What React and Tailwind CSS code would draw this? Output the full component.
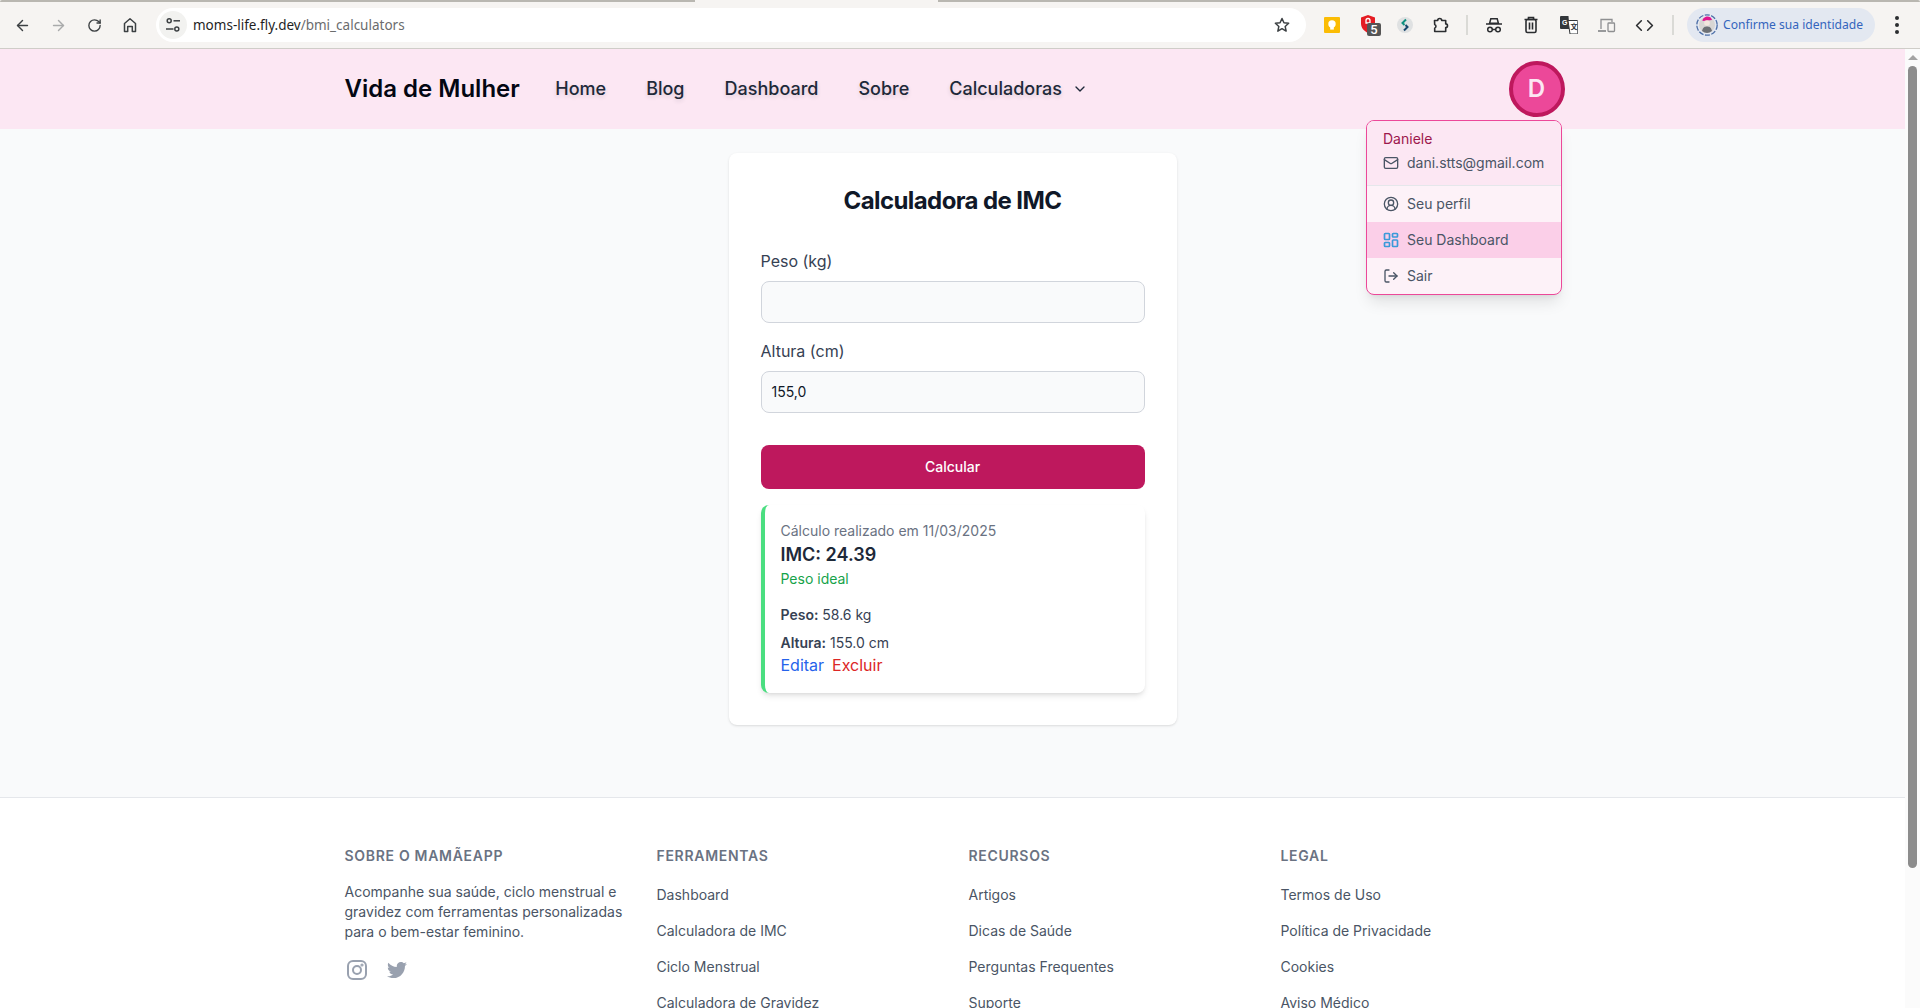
import React from "react";
import { ArrowLeft, ArrowRight, RotateCw, ChevronDown, Mail, CircleUserRound, LogOut, Code } from "lucide-react";
import { FaTwitter } from "react-icons/fa";

const Tune = () => (
  <svg width="16" height="16" viewBox="0 0 16 16" fill="none" stroke="#3c4043" strokeWidth="1.5">
    <circle cx="4.2" cy="3.8" r="2" />
    <path d="M8.5 3.8H15" />
    <circle cx="11.8" cy="12" r="2" />
    <path d="M1 12h7.5" />
  </svg>
);

const HomeIcon = () => (
  <svg width="16" height="16" viewBox="0 0 16 16" fill="none" stroke="#3c4043" strokeWidth="1.5" strokeLinejoin="round">
    <path d="M2.5 14.5V6.5L8 1.8l5.5 4.7v8h-3.2V9.5H5.7v5z" />
  </svg>
);

const StarIcon = () => (
  <svg width="16" height="16" viewBox="0 0 16 16" fill="none" stroke="#3c4043" strokeWidth="1.5" strokeLinejoin="round">
    <path d="M8 1.5l1.95 4.3 4.7.5-3.5 3.15 1 4.65L8 11.7l-4.15 2.4 1-4.65-3.5-3.15 4.7-.5z" />
  </svg>
);

const Keep = () => (
  <svg width="16" height="16" viewBox="0 0 16 16">
    <rect width="16" height="16" rx="1" fill="#fbbc04" />
    <circle cx="8" cy="7" r="3.7" fill="#fff" />
    <rect x="6.2" y="10" width="3.6" height="2.6" fill="#fff" />
  </svg>
);

const Shield = () => (
  <div className="relative w-[22px] h-[24px]">
    <svg width="16" height="18" viewBox="0 0 16 18" className="absolute left-0 top-[2px]">
      <path d="M8 0l7 2.5v6c0 4.5-3 7.5-7 9.5-4-2-7-5-7-9.5v-6z" fill="#e51c23" />
      <path d="M6 8V5.5a2 2 0 0 1 4 0V8z" fill="none" stroke="#fff" strokeWidth="1.3" />
    </svg>
    <span className="absolute left-[7px] top-[10px] w-[14px] h-[13px] rounded-[2px] bg-[#555555] text-white text-[13px] leading-[13px] text-center font-['Roboto',sans-serif] font-medium">5</span>
  </div>
);

const ExtCircle = () => (
  <svg width="16" height="16" viewBox="0 0 16 16">
    <circle cx="8" cy="8" r="8" fill="#dfe1e2" />
    <path d="M9 2.5L5.5 6l2 2" fill="none" stroke="#0f8f7e" strokeWidth="2" />
    <path d="M7 13.5L10.5 10l-2-2" fill="none" stroke="#16456b" strokeWidth="2" />
  </svg>
);

const PuzzleIcon = () => (
  <svg width="18" height="18" viewBox="0 0 18 18" fill="none" stroke="#2b2d30" strokeWidth="1.6" strokeLinejoin="round">
    <path d="M2.5 4.5h3.2a2 2 0 0 1 4 0h4v3.4a1.8 1.8 0 0 1 0 3.6v4h-11v-3.3a2 2 0 0 0 0-3.7z" />
  </svg>
);

const Spy = () => (
  <svg width="18" height="18" viewBox="0 0 18 18" fill="none" stroke="#2b2d30" strokeWidth="1.5">
    <path d="M5.8 2.8h6.4l1.2 4.4H4.6z" />
    <path d="M1 8h16" />
    <circle cx="5" cy="13.5" r="2.3" />
    <circle cx="13" cy="13.5" r="2.3" />
    <path d="M7.3 13.5h3.4" />
  </svg>
);

const Trash = () => (
  <svg width="16" height="18" viewBox="0 0 16 18" fill="none" stroke="#2b2d30" strokeWidth="1.6">
    <path d="M1.5 3.5h13M5.5 3.5V1.5h5v2" />
    <rect x="3" y="3.5" width="10" height="13" rx="1.5" />
    <path d="M6.5 6.5v7M9.5 6.5v7" />
  </svg>
);

const Translate = () => (
  <svg width="18" height="18" viewBox="0 0 18 18">
    <path d="M0 1a1 1 0 0 1 1-1h7.5l1 13H1a1 1 0 0 1-1-1z" fill="#33363a" />
    <path d="M8 4.5h9a.8.8 0 0 1 .8.8v11.9a.8.8 0 0 1-.8.8H10z" fill="#fff" stroke="#33363a" strokeWidth="1" />
    <text x="2" y="9" fontSize="7" fontWeight="700" fill="#fff" fontFamily="Liberation Sans, sans-serif">G</text>
    <text x="10.5" y="13" fontSize="7" fontWeight="700" fill="#33363a" fontFamily="Noto Sans CJK JP, sans-serif">文</text>
  </svg>
);

const Devices = () => (
  <svg width="18" height="16" viewBox="0 0 18 16" fill="none" stroke="#8e8f91" strokeWidth="1.3">
    <path d="M3 12V2.5h11V5" />
    <path d="M0 14h8" strokeWidth="1.8" />
    <rect x="10" y="6" width="6.5" height="8.5" rx=".8" />
  </svg>
);

const ProfileAvatar = () => (
  <svg width="22" height="22" viewBox="0 0 22 22">
    <circle cx="11" cy="11" r="10.2" fill="none" stroke="#4d6fa8" strokeWidth="1.3" strokeDasharray="5 1.5" />
    <circle cx="11" cy="11" r="8" fill="#d8d6d4" />
    <path d="M6.5 7c0-3 3-4.5 5-4.5s4 1 4.5 3.5z" fill="#e0148f" />
    <circle cx="11" cy="9" r="2.8" fill="#f3e6de" />
    <path d="M6 17c1-4 3-4.5 5-4.5s4 .5 5 4.5a8 8 0 0 1-10 0z" fill="#6d7075" />
  </svg>
);

const Sep = () => <div className="w-[2px] h-[20px] bg-[#dadad6] shrink-0" />;

const ToolBtn = ({ className = "", children }) => (
  <div className={"flex items-center justify-center shrink-0 " + className}>{children}</div>
);

const Browser = () => (
  <header className="h-[49px] shrink-0 bg-[#f6f4f2] border-b border-[#cfcdc8] font-['Noto_Sans',sans-serif]">
    <div className="flex h-[2px]">
      <div className="w-[695px] bg-[#b9b7b1] rounded-tl-[10px]" />
      <div className="flex-1" />
      <div className="w-[982px] bg-[#b9b7b1] rounded-tr-[10px]" />
    </div>
    <div className="flex items-center h-[46px]">
      <ToolBtn className="w-[36px] ml-[4px]"><ArrowLeft size={17} color="#3c4043" strokeWidth={2} /></ToolBtn>
      <ToolBtn className="w-[36px]"><ArrowRight size={17} color="#a9aaab" strokeWidth={2} /></ToolBtn>
      <ToolBtn className="w-[36px]"><RotateCw size={15} color="#3c4043" strokeWidth={2.2} /></ToolBtn>
      <ToolBtn className="w-[36px]"><HomeIcon /></ToolBtn>
      <div className="ml-[8px] w-[1150px] h-[34px] rounded-full bg-white flex items-center pl-[3px] pr-[16px] shrink-0">
        <div className="w-[28px] h-[28px] rounded-full bg-[#f2f2f0] flex items-center justify-center shrink-0"><Tune /></div>
        <div className="ml-[6px] mt-[2px] text-[13.5px] leading-none whitespace-nowrap text-[#1f1f1f]">
          moms-life.fly.dev<span className="text-[#6b6c6e]">/bmi_calculators</span>
        </div>
        <div className="ml-auto"><StarIcon /></div>
      </div>
      <ToolBtn className="w-[16px] ml-[18px]"><Keep /></ToolBtn>
      <ToolBtn className="w-[22px] ml-[20px] justify-start"><Shield /></ToolBtn>
      <ToolBtn className="w-[16px] ml-[15px]"><ExtCircle /></ToolBtn>
      <ToolBtn className="w-[18px] ml-[19px]"><PuzzleIcon /></ToolBtn>
      <div className="ml-[16px]"><Sep /></div>
      <ToolBtn className="w-[18px] ml-[17px]"><Spy /></ToolBtn>
      <ToolBtn className="w-[16px] ml-[20px]"><Trash /></ToolBtn>
      <ToolBtn className="w-[18px] ml-[21px]"><Translate /></ToolBtn>
      <ToolBtn className="w-[18px] ml-[20px]"><Devices /></ToolBtn>
      <ToolBtn className="w-[20px] ml-[18px]"><Code size={19} color="#2b2d30" strokeWidth={2} /></ToolBtn>
      <div className="ml-[18px]"><Sep /></div>
      <div className="ml-[13px] w-[188px] h-[34px] rounded-full bg-[#e3e8f1] flex items-center pl-[9px] shrink-0">
        <ProfileAvatar />
        <span className="ml-[5px] mt-[1px] text-[12.1px] leading-none whitespace-nowrap text-[#3465bd]">Confirme sua identidade</span>
      </div>
      <div className="ml-[20px] flex flex-col gap-[3px] shrink-0">
        <span className="w-[4px] h-[4px] rounded-full bg-[#2b2d30]" />
        <span className="w-[4px] h-[4px] rounded-full bg-[#2b2d30]" />
        <span className="w-[4px] h-[4px] rounded-full bg-[#2b2d30]" />
      </div>
    </div>
  </header>
);

const Menu = () => (
  <div className="absolute top-[59px] right-[3px] w-[196px] z-10 rounded-lg border border-[#ec4899] bg-[#fdf2f8] shadow-lg overflow-hidden text-sm text-gray-600">
    <div className="bg-[#fce7f3] border-b border-gray-200 pl-[16.5px] pr-2 pt-[8px] pb-[12px]">
      <div className="text-[#9d174d] leading-5">Daniele</div>
      <div className="flex items-center gap-2 mt-[4px] leading-5">
        <Mail size={16} strokeWidth={2} className="shrink-0" />
        <span className="whitespace-nowrap">dani.stts@gmail.com</span>
      </div>
    </div>
    <div className="flex items-center gap-2 h-9 pl-[16.5px]"><CircleUserRound size={16} strokeWidth={2} />Seu perfil</div>
    <div className="flex items-center gap-2 h-9 pl-[16.5px] bg-[#fbcfe8]">
      <svg width="16" height="16" viewBox="0 0 16 16" fill="none" stroke="#3b9ad9" strokeWidth="1.7">
        <rect x="1.5" y="1.5" width="5" height="6" rx=".7" />
        <rect x="9.5" y="1.5" width="5" height="3.5" rx=".7" />
        <rect x="1.5" y="10.5" width="5" height="4" rx=".7" />
        <rect x="9.5" y="8" width="5" height="6.5" rx=".7" />
      </svg>
      Seu Dashboard
    </div>
    <div className="flex items-center gap-2 h-9 pl-[16.5px]"><LogOut size={16} strokeWidth={2} />Sair</div>
  </div>
);

const Nav = () => (
  <nav className="h-20 shrink-0 bg-[#fce7f3]">
    <div className="max-w-7xl mx-auto h-full px-8 flex items-center">
      <span className="text-2xl font-semibold text-gray-950">Vida de Mulher</span>
      <div className="flex items-center gap-10 ml-[35.5px] text-lg font-medium text-gray-800 [text-shadow:0_2px_4px_rgba(31,41,55,0.14)]">
        <span>Home</span>
        <span>Blog</span>
        <span>Dashboard</span>
        <span>Sobre</span>
        <span className="flex items-center gap-[10px]">Calculadoras<ChevronDown size={16} strokeWidth={2} /></span>
      </div>
      <div className="relative ml-auto -mr-[4px]">
        <div className="w-14 h-14 rounded-full bg-[#ec4899] border-4 border-[#be185d] flex items-center justify-center text-[#fce7f3] text-2xl font-semibold">D</div>
        <Menu />
      </div>
    </div>
  </nav>
);

const Field = ({ label, value, className = "" }) => (
  <div className={className}>
    <label className="block text-base leading-6 text-gray-700 mb-2">{label}</label>
    <div className="h-[42px] rounded-lg border border-gray-300 bg-gray-50 flex items-center px-[10px] text-sm text-gray-900">{value}</div>
  </div>
);

const Calculator = () => (
  <main className="bg-gray-50 pt-6 pb-[72px] flex justify-center">
    <section className="w-[448px] bg-white rounded-lg shadow-sm p-8">
      <h1 className="text-2xl font-bold tracking-tight text-gray-900 text-center mb-8">Calculadora de IMC</h1>
      <Field label="Peso (kg)" className="mb-4" />
      <Field label="Altura (cm)" value="155,0" className="mb-8" />
      <div className="h-11 rounded-lg bg-[#be185d] text-white text-sm font-medium flex items-center justify-center">Calcular</div>
      <div className="mt-4 rounded-lg border-l-4 border-[#4ade80] bg-white shadow-md p-4">
        <p className="text-sm text-gray-500">Cálculo realizado em 11/03/2025</p>
        <p className="text-lg font-semibold text-gray-800">IMC: 24.39</p>
        <p className="text-sm text-[#16a34a]">Peso ideal</p>
        <p className="mt-4 mb-2 text-sm text-gray-700"><strong className="font-semibold">Peso:</strong> 58.6 kg</p>
        <p className="text-sm text-gray-700"><strong className="font-semibold">Altura:</strong> 155.0 cm</p>
        <div className="flex gap-2 text-base">
          <span className="text-[#2563eb]">Editar</span>
          <span className="text-[#dc2626]">Excluir</span>
        </div>
      </div>
    </section>
  </main>
);

const Col = ({ title, items }) => (
  <div>
    <h3 className="text-sm font-semibold uppercase tracking-wider text-gray-500 mb-4">{title}</h3>
    <ul>
      {items.map((t) => (
        <li key={t} className="leading-6 mb-3 text-gray-600"><span className="text-sm">{t}</span></li>
      ))}
    </ul>
  </div>
);

const Footer = () => (
  <footer className="bg-white border-t border-gray-200">
    <div className="max-w-7xl mx-auto px-8 pt-12 grid grid-cols-4 gap-8">
      <div>
        <h3 className="text-sm font-semibold uppercase tracking-wider text-gray-500 mb-4">Sobre o MamãeApp</h3>
        <p className="text-sm text-gray-600">Acompanhe sua saúde, ciclo menstrual e gravidez com ferramentas personalizadas para o bem-estar feminino.</p>
        <div className="flex gap-4 mt-4 text-gray-400">
          <svg width="24" height="24" viewBox="0 0 24 24" fill="none" stroke="currentColor" strokeWidth="2">
            <rect x="3" y="3" width="18" height="18" rx="5" />
            <circle cx="12" cy="12" r="4" />
            <circle cx="17" cy="7" r=".6" />
          </svg>
          <div className="w-6 h-6 flex items-center justify-center"><FaTwitter size={20} /></div>
        </div>
      </div>
      <Col title="Ferramentas" items={["Dashboard", "Calculadora de IMC", "Ciclo Menstrual", "Calculadora de Gravidez"]} />
      <Col title="Recursos" items={["Artigos", "Dicas de Saúde", "Perguntas Frequentes", "Suporte"]} />
      <Col title="Legal" items={["Termos de Uso", "Política de Privacidade", "Cookies", "Aviso Médico"]} />
    </div>
  </footer>
);

const Scrollbar = () => (
  <aside className="w-[15px] shrink-0 bg-[#fbfbfb] flex flex-col items-center">
    <div className="mt-[6px] w-0 h-0 border-x-[5px] border-x-transparent border-b-[5px] border-b-[#a3a3a3]" />
    <div className="mt-[6px] w-[9px] h-[802px] rounded-full bg-[#8c8c8c]" />
  </aside>
);

export default function App() {
  return (
    <div className="h-[1008px] w-[1920px] overflow-hidden flex flex-col bg-[#fdfbf9] font-['Inter',sans-serif]">
      <Browser />
      <div className="flex flex-1 min-h-0">
        <div className="flex-1 min-w-0 overflow-hidden">
          <Nav />
          <Calculator />
          <Footer />
        </div>
        <Scrollbar />
      </div>
    </div>
  );
}
